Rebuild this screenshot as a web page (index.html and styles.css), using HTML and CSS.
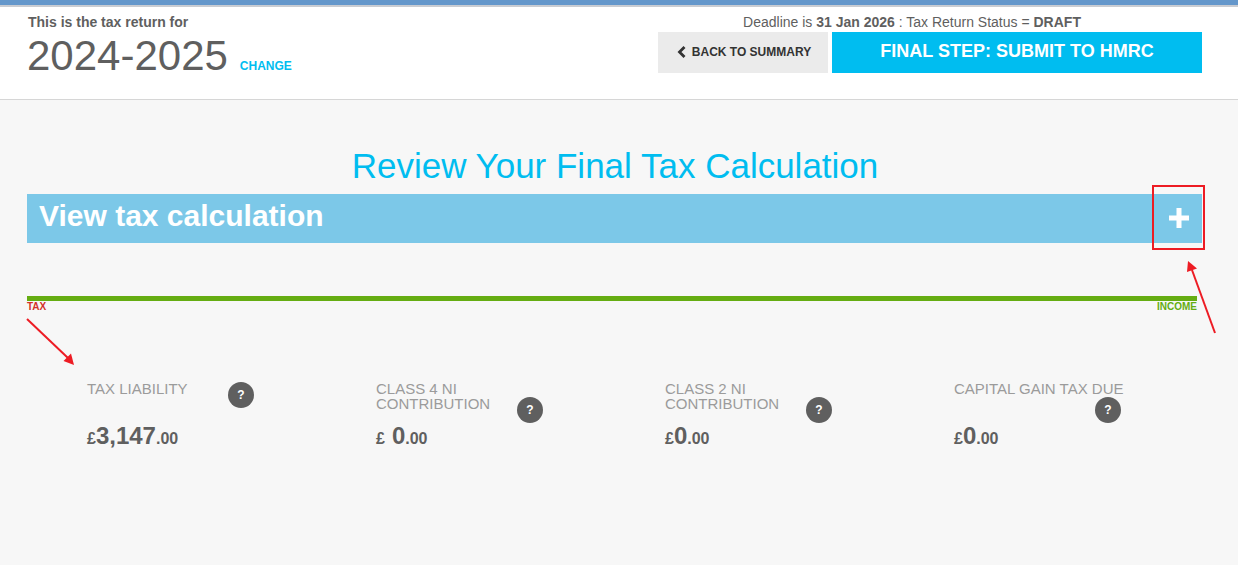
FILE: index.html
```html
<!DOCTYPE html>
<html lang="en">
<head>
<meta charset="utf-8">
<title>Review Your Final Tax Calculation</title>
<link rel="stylesheet" href="styles.css">
</head>
<body>
<div class="topbar"></div>
<header class="header">
  <div class="year-block">
    <p class="year-intro">This is the tax return for</p>
    <div class="year-row">
      <span class="year">2024-2025</span>
      <a class="change" href="#">CHANGE</a>
    </div>
  </div>
  <div class="actions">
    <p class="deadline">Deadline is <b>31 Jan 2026</b> : Tax Return Status = <b>DRAFT</b></p>
    <div class="buttons">
      <a class="btn-back" href="#">
        <svg class="chevron" viewBox="0 0 9 12" width="9" height="12"><path d="M7.500 1 2.500 6l5 5" fill="none" stroke="#333" stroke-width="2.800"/></svg>
        BACK TO SUMMARY
      </a>
      <a class="btn-submit" href="#">FINAL STEP: SUBMIT TO HMRC</a>
    </div>
  </div>
</header>
<main class="main">
  <h1 class="title">Review Your Final Tax Calculation</h1>
  <div class="accordion">
    <span class="accordion-label">View tax calculation</span>
    <svg class="plus" viewBox="0 0 20 20" width="20" height="20"><path d="M7.500 0h5v7.500H20v5h-7.500V20h-5v-7.500H0v-5h7.500z" fill="#fff"/></svg>
  </div>
  <div class="meter"></div>
  <div class="meter-labels"><span class="tax">TAX</span><span class="income">INCOME</span></div>
  <section class="stats">
    <div class="stat">
      <div class="stat-head">
        <span class="stat-label">TAX LIABILITY</span>
        <span class="help">?</span>
      </div>
      <div class="amount"><span class="cur">£</span><span class="whole">3,147</span><span class="dec">.00</span></div>
    </div>
    <div class="stat">
      <div class="stat-head">
        <span class="stat-label">CLASS 4 NI CONTRIBUTION</span>
        <span class="help help-low">?</span>
      </div>
      <div class="amount"><span class="cur cur-gap">£</span><span class="whole">0</span><span class="dec">.00</span></div>
    </div>
    <div class="stat">
      <div class="stat-head">
        <span class="stat-label">CLASS 2 NI CONTRIBUTION</span>
        <span class="help help-low">?</span>
      </div>
      <div class="amount"><span class="cur">£</span><span class="whole">0</span><span class="dec">.00</span></div>
    </div>
    <div class="stat">
      <div class="stat-head">
        <span class="stat-label stat-label-long">CAPITAL GAIN TAX DUE</span>
        <span class="help help-low">?</span>
      </div>
      <div class="amount"><span class="cur">£</span><span class="whole">0</span><span class="dec">.00</span></div>
    </div>
  </section>
</main>
<div class="marker-box"></div>
<svg class="annotations" width="1238" height="565" viewBox="0 0 1238 565">
  <g stroke="#ed1c24" stroke-width="2" fill="#ed1c24">
    <path d="M27 319 68 358" fill="none"/>
    <path d="M74 365 63.500 361 71 353.500z" stroke="none"/>
    <path d="M1215 333 1192 270" fill="none"/>
    <path d="M1188 261 1197 268.500 1187 272z" stroke="none"/>
  </g>
</svg>
</body>
</html>
```
FILE: styles.css
```css
* { box-sizing: border-box; }
html, body { margin: 0; padding: 0; }
body {
  position: relative;
  height: 565px;
  overflow: hidden;
  background: #f7f7f7;
  font-family: "Liberation Sans", Arial, sans-serif;
  color: #5f5f5f;
}
a { text-decoration: none; }
p { margin: 0; }

.topbar {
  height: 7px;
  background: #6497cb;
  border-bottom: 2px solid #c9ccd2;
}
.header {
  height: 93px;
  background: #fff;
  border-bottom: 1px solid #d6d6d6;
  display: flex;
  justify-content: space-between;
  padding: 0 36px 0 27px;
}
.year-intro {
  margin: 7px 0 0 1px;
  font-size: 14px;
  line-height: 16px;
  font-weight: bold;
}
.year-row { display: flex; align-items: baseline; margin-top: 2px; }
.year { font-size: 42px; line-height: 48px; }
.change {
  margin-left: 12px;
  font-size: 12px;
  font-weight: bold;
  color: #00bdf0;
}
.actions { width: 544px; }
.deadline {
  margin-top: 7px;
  height: 18px;
  padding-right: 36px;
  font-size: 14px;
  line-height: 16px;
  text-align: center;
}
.buttons { display: flex; gap: 4px; }
.btn-back {
  width: 170px;
  height: 41px;
  background: #ebebeb;
  color: #333;
  font-size: 12px;
  font-weight: bold;
  display: flex;
  align-items: center;
  justify-content: center;
  gap: 6px;
  padding: 0 0 2px 2px;
}
.btn-submit {
  width: 370px;
  height: 41px;
  background: #00bdf0;
  color: #fff;
  font-size: 18px;
  font-weight: bold;
  display: flex;
  align-items: center;
  justify-content: center;
  padding-bottom: 2px;
}

.main { padding: 0 40px 0 27px; }
.title {
  margin: 46px 0 0;
  height: 48px;
  font-size: 35px;
  line-height: 39px;
  font-weight: normal;
  color: #00bdf0;
  text-align: center;
  width: 1176px;
}
.accordion {
  width: 1175px;
  height: 49px;
  background: #7cc8e8;
  display: flex;
  justify-content: space-between;
  align-items: center;
  padding: 0 13px 0 12px;
}
.accordion-label {
  font-size: 30px;
  font-weight: bold;
  color: #fff;
  padding-bottom: 5px;
}
.plus { margin-top: -1px; }
.meter {
  margin-top: 53px;
  width: 1170px;
  height: 5px;
  background: #65ad12;
}
.meter-labels {
  width: 1170px;
  display: flex;
  justify-content: space-between;
  font-size: 10px;
  line-height: 12px;
  font-weight: bold;
}
.tax { color: #d3312a; }
.income { color: #65ad12; }

.stats {
  display: grid;
  grid-template-columns: repeat(4, 289px);
  padding-left: 60px;
  margin-top: 68px;
}
.stat-head { display: flex; height: 41px; }
.stat-label {
  flex: 0 0 141px;
  min-width: 0;
  padding-right: 10px;
  font-size: 15px;
  line-height: 15px;
  color: #9b9b9b;
}
.stat-label-long { white-space: nowrap; }
.help {
  flex: 0 0 26px;
  width: 26px;
  height: 26px;
  border-radius: 50%;
  background: #5f5f5f;
  color: #fff;
  font-size: 12px;
  font-weight: bold;
  display: flex;
  align-items: center;
  justify-content: center;
  margin-top: 1px;
}
.help-low { margin-top: 16px; }
.amount {
  font-weight: bold;
  line-height: 28px;
  white-space: nowrap;
}
.cur { font-size: 16px; }
.cur-gap { margin-right: 7px; }
.whole { font-size: 24px; }
.dec { font-size: 16px; }

.marker-box {
  position: absolute;
  left: 1152px;
  top: 185px;
  width: 53px;
  height: 65px;
  border: 2px solid #ed1c24;
}
.annotations {
  position: absolute;
  left: 0;
  top: 0;
  pointer-events: none;
}
```
